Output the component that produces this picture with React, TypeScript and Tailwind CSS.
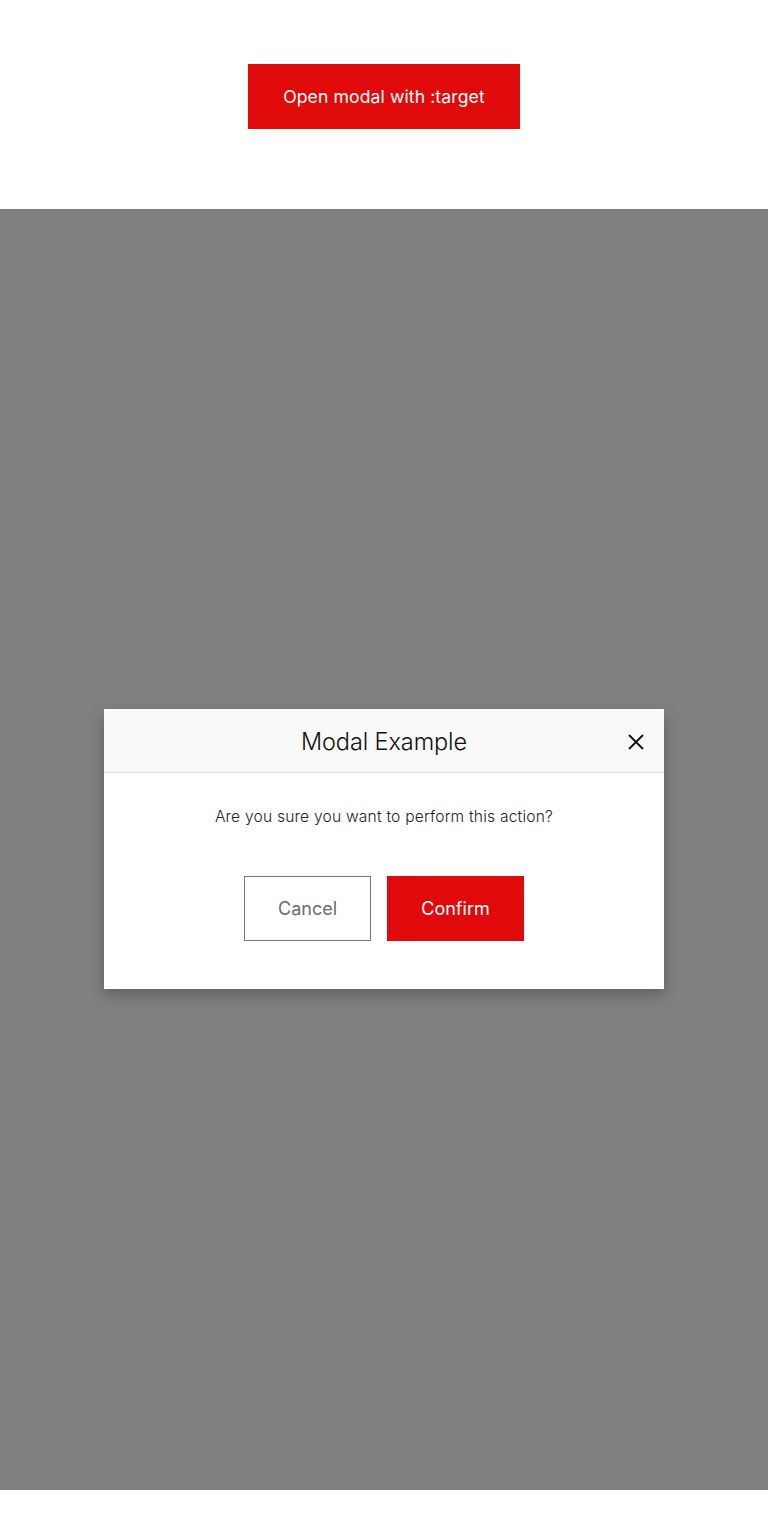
export default function App() {
  return (
    <div className="w-full min-h-[1538px] bg-white" style={{ fontFamily: "Inter, 'Noto Sans', sans-serif" }}>
      <div className="pt-16 flex justify-center">
        <button className="w-[272px] h-[65px] pt-[2px] bg-[#e10a0a] text-white text-[17.6px] font-normal tracking-[0.1px]">
          Open modal with :target
        </button>
      </div>
      <div className="mt-20 h-[1281px] pb-[2px] bg-[#808080] flex items-center justify-center">
        <div className="w-[560px] h-[280px] bg-white shadow-[0_6px_14px_rgba(0,0,0,0.25)] flex flex-col">
          <div className="h-[64px] pt-[4px] bg-[#f9f9f9] border-b border-[#dfe2e2] relative flex items-center justify-center">
            <h2 className="text-[23.5px] font-light text-[#111] tracking-[-0.1px]">Modal Example</h2>
            <button className="absolute right-[16px] top-[21px] w-6 h-6 flex items-center justify-center">
              <svg width="16" height="16" viewBox="0 0 16 16" fill="none" stroke="#111" strokeWidth="1.8">
                <path d="M1 1L15 15M15 1L1 15" />
              </svg>
            </button>
          </div>
          <div className="flex flex-col items-center pt-[32px]">
            <p className="text-[15.6px] font-light text-[#222] tracking-[0.2px]">Are you sure you want to perform this action?</p>
            <div className="mt-[48px] flex gap-4">
              <button className="w-[127px] h-[65px] border border-[#777] text-[#6b6b6b] text-[18px]">Cancel</button>
              <button className="w-[137px] h-[65px] bg-[#e10a0a] text-white text-[18px] font-normal">Confirm</button>
            </div>
          </div>
        </div>
      </div>
    </div>
  );
}
